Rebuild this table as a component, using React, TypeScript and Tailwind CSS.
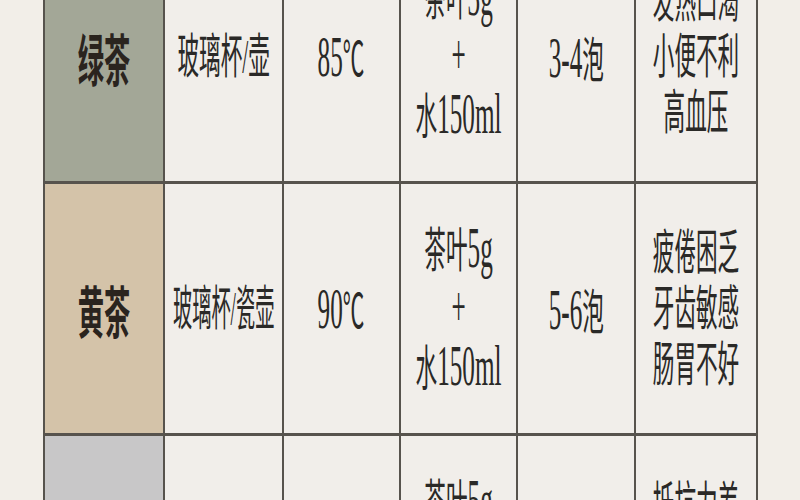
import React from "react";

type Row = {
  name: string;
  nameBg: string;
  vessel: string;
  vesselScale: string;
  temp: string;
  leaf: string;
  times: string;
  symptoms: string[];
};

const rows: Row[] = [
  {
    name: "绿茶",
    nameBg: "bg-[#a3a797]",
    vessel: "玻璃杯/壶",
    vesselScale: "scale-x-[0.45]",
    temp: "85",
    leaf: "3g",
    times: "3-4",
    symptoms: ["发热口渴", "小便不利", "高血压"],
  },
  {
    name: "黄茶",
    nameBg: "bg-[#d4c3a9]",
    vessel: "玻璃杯/瓷壶",
    vesselScale: "scale-x-[0.4]",
    temp: "90",
    leaf: "5g",
    times: "5-6",
    symptoms: ["疲倦困乏", "牙齿敏感", "肠胃不好"],
  },
  {
    name: "白茶",
    nameBg: "bg-[#c8c7c8]",
    vessel: "玻璃杯/瓷壶",
    vesselScale: "scale-x-[0.4]",
    temp: "90",
    leaf: "5g",
    times: "4-5",
    symptoms: ["抵抗力差", "口干舌燥", "体质虚弱"],
  },
];

const font = "font-['Liberation_Serif','Noto_Sans_CJK_SC',serif]";

function L({ children }: { children: React.ReactNode }) {
  return <span className="text-[56px] leading-[56px]">{children}</span>;
}

function Cell({
  children,
  bg = "bg-[#f1eeea]",
  w,
}: {
  children?: React.ReactNode;
  bg?: string;
  w: string;
}) {
  return (
    <div className={`${bg} ${w} h-[249px] flex items-center justify-center overflow-hidden`}>
      {children}
    </div>
  );
}

function Txt({
  children,
  scale = "scale-x-[0.45]",
  extra = "",
}: {
  children: React.ReactNode;
  scale?: string;
  extra?: string;
}) {
  return (
    <div
      className={`shrink-0 whitespace-nowrap text-center text-[48px] leading-[56px] text-[#2a2927] ${scale} ${font} ${extra}`}
    >
      {children}
    </div>
  );
}

export default function App() {
  return (
    <div className="w-[800px] h-[500px] overflow-hidden bg-[#f2eee8]">
      <div className="pl-[43px] -mt-[71px]">
        <div className="inline-flex flex-col gap-y-[3px] bg-[#57534d] border-x-2 border-y-[3px] border-[#57534d]">
          {rows.map((r) => (
            <div key={r.name} className="flex gap-x-[2px]">
              <Cell bg={r.nameBg} w="w-[118px]">
                <div
                  className={`shrink-0 whitespace-nowrap text-[56px] leading-[60px] font-bold text-[#2a241e] scale-x-[0.47] font-['Noto_Sans_CJK_SC',sans-serif]`}
                >
                  {r.name}
                </div>
              </Cell>
              <Cell w="w-[117px]">
                <Txt scale={r.vesselScale}>{r.vessel}</Txt>
              </Cell>
              <Cell w="w-[115px]">
                <Txt extra="pt-[4px]">
                  <L>{r.temp}</L>℃
                </Txt>
              </Cell>
              <Cell w="w-[115px]">
                <Txt>
                  <div>
                    茶叶<L>{r.leaf}</L>
                  </div>
                  <div>
                    <L>+</L>
                  </div>
                  <div>
                    水<L>150ml</L>
                  </div>
                </Txt>
              </Cell>
              <Cell w="w-[116px]">
                <Txt extra="pt-[6px]">
                  <L>{r.times}</L>泡
                </Txt>
              </Cell>
              <Cell w="w-[120px]">
                <Txt>
                  {r.symptoms.map((s) => (
                    <div key={s}>{s}</div>
                  ))}
                </Txt>
              </Cell>
            </div>
          ))}
        </div>
      </div>
    </div>
  );
}
